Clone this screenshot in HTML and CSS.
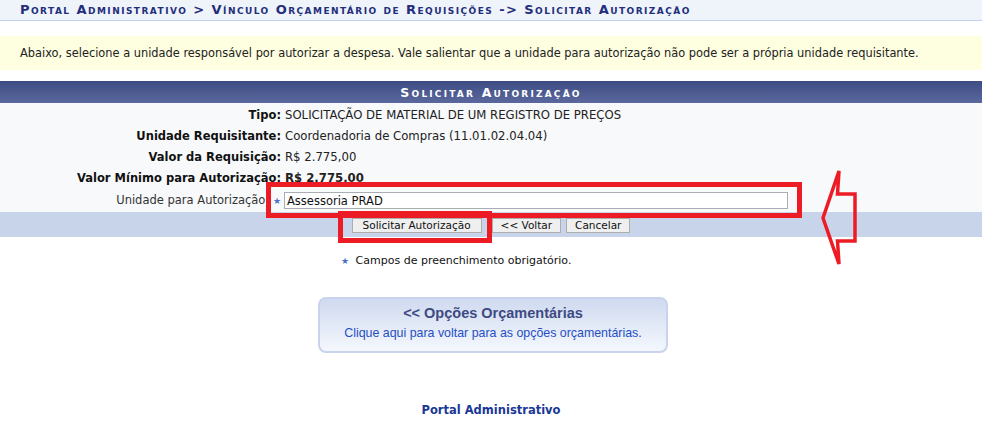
FILE: index.html
```html
<!DOCTYPE html>
<html lang="pt-BR">
<head>
  <meta charset="UTF-8">
  <title>Solicitar Autorização</title>
  <link rel="stylesheet" href="styles.css">
</head>
<body>
<div class="page">
  <h2 class="breadcrumb">Portal Administrativo &gt; Vínculo Orçamentário de Requisições -&gt; Solicitar Autorização</h2>

  <div class="notice">
    Abaixo, selecione a unidade responsável por autorizar a despesa. Vale salientar que a unidade para autorização não pode ser a própria unidade requisitante.
  </div>

  <div class="form-table">
    <div class="caption">Solicitar Autorização</div>
    <div class="rows">
      <div class="label">Tipo:</div>
      <div class="value">SOLICITAÇÃO DE MATERIAL DE UM REGISTRO DE PREÇOS</div>

      <div class="label">Unidade Requisitante:</div>
      <div class="value">Coordenadoria de Compras (11.01.02.04.04)</div>

      <div class="label">Valor da Requisição:</div>
      <div class="value">R$ 2.775,00</div>

      <div class="label">Valor Mínimo para Autorização:</div>
      <div class="value strong">R$ 2.775,00</div>

      <div class="label plain input-row">Unidade para Autorização: <span class="required">&#9733;</span></div>
      <div class="value input-row"><input type="text" class="field" value="Assessoria PRAD"></div>
    </div>
    <div class="actions">
      <button class="btn first">Solicitar Autorização</button>
      <button class="btn">&lt;&lt; Voltar</button>
      <button class="btn">Cancelar</button>
    </div>
  </div>

  <p class="mandatory"><span class="required">&#9733;</span> Campos de preenchimento obrigatório.</p>

  <a class="options-box" href="#">
    <span class="options-title">&lt;&lt; Opções Orçamentárias</span>
    <span class="options-sub">Clique aqui para voltar para as opções orçamentárias.</span>
  </a>

  <div class="footer">Portal Administrativo</div>
</div>

<!-- red markings drawn over the screenshot -->
<svg class="marks" width="986" height="423" viewBox="0 0 986 423">
  <rect x="268.5" y="184.5" width="531" height="31" fill="none" stroke="#ed1c24" stroke-width="5"/>
  <rect x="340.5" y="213.5" width="149" height="27" fill="none" stroke="#ed1c24" stroke-width="5"/>
  <polygon points="839,171 837.5,194 855,194 855,241 837.5,241 839,264 823,218" fill="none" stroke="#ed1c24" stroke-width="3.5" stroke-linejoin="miter"/>
</svg>
</body>
</html>
```

FILE: styles.css
```css
body {
  margin: 0;
  background: #fff;
  font-family: Verdana, "DejaVu Sans", sans-serif;
  font-size: 11.5px;
  color: #222;
}

.page {
  width: 982px;
}

.breadcrumb {
  margin: 0;
  height: 20px;
  line-height: 20px;
  padding-left: 20px;
  background: #eff3fa;
  border-bottom: 1px solid #c3d0ec;
  color: #222e7c;
  font-size: 13px;
  font-weight: bold;
  font-variant: small-caps;
  letter-spacing: 1.45px;
  white-space: nowrap;
}

.notice {
  margin-top: 15px;
  height: 34px;
  line-height: 34px;
  padding: 0 20px;
  background: #fefee1;
  color: #222;
  font-size: 11.4px;
  white-space: nowrap;
}

.form-table {
  margin-top: 11px;
}

.caption {
  height: 22px;
  line-height: 23px;
  text-align: center;
  color: #fff;
  font-size: 12.5px;
  font-weight: bold;
  font-variant: small-caps;
  letter-spacing: 2.2px;
  background: linear-gradient(#3e4c84, #5a689d);
}

.rows {
  display: grid;
  grid-template-columns: 281px 1fr;
  column-gap: 4px;
  padding-top: 2px;
  background: #f8f9fb;
}

.label, .value {
  height: 21px;
  line-height: 21px;
  white-space: nowrap;
}

.label {
  text-align: right;
  font-weight: bold;
  color: #111;
}

.value {
  font-size: 11.7px;
}

.label.plain {
  font-weight: normal;
  color: #333;
}

.value.strong {
  font-weight: bold;
}

.input-row {
  height: 23px;
  line-height: 23px;
}

.value.input-row {
  display: flex;
  align-items: center;
}

.required {
  color: #4d6fc9;
  font-size: 9px;
}

.field {
  box-sizing: border-box;
  width: 504px;
  height: 17px;
  margin: 0 0 0 -1px;
  padding: 0 2px;
  border: 1px solid #a9aeb4;
  font-family: Verdana, "DejaVu Sans", sans-serif;
  font-size: 11.5px;
  color: #111;
}

.actions {
  height: 25px;
  display: flex;
  justify-content: center;
  align-items: center;
  gap: 5px;
  background: #c8d4ea;
}

.btn {
  height: 15px;
  padding: 0 8px;
  margin: 1px 0 0;
  border: 1px solid #adadad;
  background: #efefef;
  font-family: Verdana, "DejaVu Sans", sans-serif;
  font-size: 10.5px;
  line-height: 13px;
  color: #111;
}

.btn.first {
  padding: 0 10px;
  margin-right: 5px;
}

.mandatory {
  margin: 17px 0 0 341px;
  line-height: 14px;
  font-size: 11px;
  color: #111;
}

.mandatory .required {
  margin-right: 3px;
}

.options-box {
  display: flex;
  flex-direction: column;
  align-items: center;
  box-sizing: border-box;
  width: 350px;
  height: 56px;
  margin: 29px 0 0 318px;
  padding-top: 6px;
  border: 2px solid #c9d4ec;
  border-radius: 8px;
  background: linear-gradient(#d0daf0, #f4f7fd);
  font-family: "Liberation Sans", Arial, sans-serif;
  text-decoration: none;
}

.options-title {
  font-size: 14.5px;
  font-weight: bold;
  color: #3e4b83;
  line-height: 17px;
}

.options-sub {
  margin-top: 4px;
  font-size: 12.4px;
  color: #1f4fc4;
  line-height: 14px;
}

.footer {
  margin-top: 50px;
  text-align: center;
  font-weight: bold;
  color: #1b3796;
}

.marks {
  position: absolute;
  top: 0;
  left: 0;
  pointer-events: none;
}
```
